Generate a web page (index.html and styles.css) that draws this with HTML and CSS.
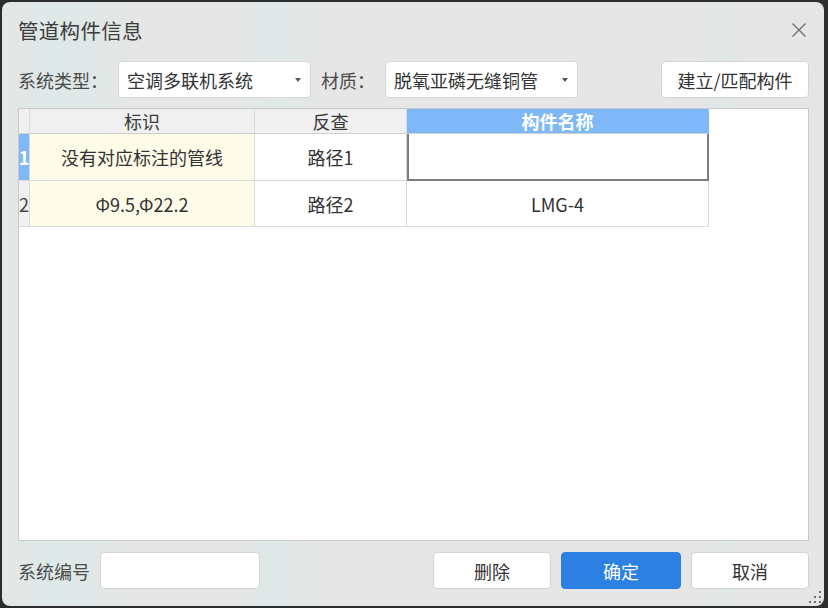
FILE: index.html
```html
<!DOCTYPE html>
<html lang="zh-CN">
<head>
<meta charset="utf-8">
<title>管道构件信息</title>
<link rel="stylesheet" href="styles.css">
</head>
<body>
<div class="dialog">
  <div class="titlebar">
    <span class="title">管道构件信息</span>
    <span class="close">
      <svg width="16" height="16" viewBox="0 0 16 16"><path d="M1.5 1.5 L14.5 14.5 M14.5 1.5 L1.5 14.5" stroke="#707070" stroke-width="1.4" fill="none"/></svg>
    </span>
  </div>

  <div class="toolbar">
    <span class="lbl lbl-type">系统类型：</span>
    <div class="combo"><span class="combo-text">空调多联机系统</span><span class="caret"></span></div>
    <span class="lbl lbl-mat">材质：</span>
    <div class="combo"><span class="combo-text">脱氧亚磷无缝铜管</span><span class="caret"></span></div>
    <span class="spacer"></span>
    <div class="btn btn-build">建立/匹配构件</div>
  </div>

  <div class="grid-wrap">
    <div class="grid">
      <div class="cell hdr corner"></div>
      <div class="cell hdr">标识</div>
      <div class="cell hdr">反查</div>
      <div class="cell hdr hdr-sel">构件名称</div>

      <div class="cell rowhdr rowhdr-sel">1</div>
      <div class="cell row1 yellow">没有对应标注的管线</div>
      <div class="cell row1">路径1</div>
      <div class="cell row1 current"></div>

      <div class="cell rowhdr">2</div>
      <div class="cell yellow">Φ9.5,Φ22.2</div>
      <div class="cell">路径2</div>
      <div class="cell">LMG-4</div>
    </div>
  </div>

  <div class="footer">
    <span class="lbl lbl-code">系统编号</span>
    <div class="input"></div>
    <span class="spacer"></span>
    <div class="btn btn-del">删除</div>
    <div class="btn btn-primary">确定</div>
    <div class="btn btn-cancel">取消</div>
  </div>

  <div class="grip">
    <i class="d d1"></i><i class="d d2"></i><i class="d d3"></i>
    <i class="d d4"></i><i class="d d5"></i><i class="d d6"></i>
  </div>
</div>
</body>
</html>
```

FILE: styles.css
```css
* { box-sizing: border-box; }

html, body {
  margin: 0;
  padding: 0;
  width: 828px;
  height: 608px;
  overflow: hidden;
}

body {
  background: #2b2d2f;
  font-family: "Noto Sans CJK SC", "Noto Sans", sans-serif;
  font-size: 18px;
  color: #333;
}

.dialog {
  position: relative;
  margin: 2px 0 0 2px;
  width: 822px;
  height: 604px;
  border-radius: 8px;
  background:
    linear-gradient(90deg, rgba(230,230,230,0) 0, rgba(214,236,234,0.55) 45px, rgba(214,236,234,0.35) 90px, rgba(230,230,230,0) 140px, rgba(230,230,230,0) 230px, rgba(214,236,234,0.45) 270px, rgba(230,230,230,0) 320px, rgba(230,230,230,0) 700px, rgba(214,236,234,0.4) 720px, rgba(230,230,230,0) 740px),
    #e6e6e6;
  padding: 0 15px 17px 16px;
  display: flex;
  flex-direction: column;
}

/* title bar */
.titlebar {
  height: 59px;
  display: flex;
  align-items: center;
  padding-bottom: 3px;
}
.title {
  font-size: 20.5px;
  color: #3c3c3c;
  letter-spacing: 0.3px;
}
.close {
  margin-left: auto;
  margin-right: 2px;
  width: 16px;
  height: 16px;
  display: flex;
}

/* toolbar */
.toolbar {
  height: 37px;
  display: flex;
  align-items: center;
  margin-bottom: 10px;
}
.lbl {
  color: #4a4a4a;
  white-space: nowrap;
}
.lbl-type { width: 100px; }
.lbl-mat { width: 74px; padding-left: 10px; }
.spacer { flex: 1; }

.combo {
  width: 193px;
  height: 37px;
  background: #fff;
  border: 1px solid #d6d6d6;
  border-radius: 4px;
  display: flex;
  align-items: center;
  padding: 0 9px 0 8px;
}
.combo-text { flex: 1; color: #333; }
.caret {
  width: 0;
  height: 0;
  border-left: 3.5px solid transparent;
  border-right: 3.5px solid transparent;
  border-top: 4px solid #555;
}

.btn {
  height: 37px;
  background: #fff;
  border: 1px solid #d4d4d4;
  border-radius: 4px;
  display: flex;
  align-items: center;
  justify-content: center;
  color: #333;
}
.btn-build { width: 148px; }

/* grid */
.grid-wrap {
  height: 433px;
  background: #fff;
  border: 1px solid #c9c9c9;
}
.grid {
  display: grid;
  grid-template-columns: 11px 225px 152px 302px;
  grid-template-rows: 25px 47px 46px;
  width: 690px;
}
.cell {
  border-right: 1px solid #dadada;
  border-bottom: 1px solid #dadada;
  display: flex;
  align-items: center;
  justify-content: center;
  white-space: nowrap;
  color: #333;
}
.hdr {
  background: #f0f0f0;
  color: #3a3a3a;
  border-bottom-color: #d0d0d0;
}
.hdr-sel {
  background: #7eb8f6;
  color: #fff;
  font-weight: bold;
  border-right-color: #7eb8f6;
}
.rowhdr {
  background: #f0f0f0;
  color: #444;
  overflow: hidden;
}
.rowhdr-sel {
  background: #7eb8f6;
  color: #fff;
  font-weight: bold;
}
.yellow { background: #fefbe8; }
.current {
  border: 2px solid #7d7d7d;
  border-top: none;
}

/* footer */
.footer {
  margin-top: 11px;
  height: 37px;
  display: flex;
  align-items: center;
}
.lbl-code { width: 82px; }
.input {
  width: 160px;
  height: 37px;
  background: #fff;
  border: 1px solid #d4d4d4;
  border-radius: 4px;
}
.btn-del { width: 118px; }
.btn-primary {
  width: 120px;
  margin-left: 10px;
  background: #2c80e2;
  border-color: #2c80e2;
  color: #fff;
}
.btn-cancel { width: 118px; margin-left: 10px; }

/* resize grip */
.grip {
  position: absolute;
  right: 3px;
  bottom: 3px;
  width: 12px;
  height: 12px;
}
.d {
  position: absolute;
  width: 2px;
  height: 2px;
  background: #6f6f6f;
}
.d1 { right: 0; top: 0; }
.d2 { right: 0; top: 5px; }
.d3 { right: 5px; top: 5px; }
.d4 { right: 0; top: 10px; }
.d5 { right: 5px; top: 10px; }
.d6 { right: 10px; top: 10px; }
```
